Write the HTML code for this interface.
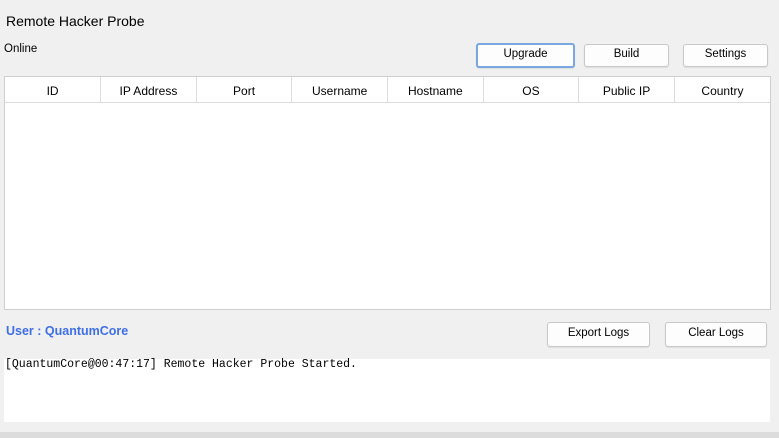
<!DOCTYPE html>
<html><head><style>
body{margin:0;width:779px;height:438px;background:#f0f0f0;font-family:"Liberation Sans",sans-serif;position:relative;overflow:hidden;color:#000}
.a{position:absolute}
.btn{position:absolute;background:#fdfdfd;border:1px solid #c8c8c8;border-radius:3px;font-size:11.5px;text-align:center;box-sizing:border-box;box-shadow:0 1px 1px rgba(0,0,0,.08)}
table{border-collapse:collapse;table-layout:fixed}
th{font-weight:normal;font-size:12px;height:23px;padding:2px 0 0 0;border-right:1px solid #dcdcdc;border-bottom:1px solid #dcdcdc}
</style></head><body>
<div class="a" style="left:6px;top:13px;font-size:14px">Remote Hacker Probe</div>
<div class="a" style="left:4px;top:43px;font-size:11.5px">Online</div>
<div class="btn" style="left:476px;top:43px;width:99px;height:25px;line-height:19px;border:2px solid #7aa7e0">Upgrade</div>
<div class="btn" style="left:584px;top:44px;width:85px;height:23px;line-height:18px">Build</div>
<div class="btn" style="left:683px;top:44px;width:85px;height:23px;line-height:18px">Settings</div>
<div class="a" style="left:4px;top:76px;width:765px;height:232px;background:#fff;border:1px solid #cfcfcf">
<table style="width:765px"><tr><th>ID</th><th>IP Address</th><th>Port</th><th>Username</th><th>Hostname</th><th>OS</th><th>Public IP</th><th style="border-right:none">Country</th></tr></table>
</div>
<div class="a" style="left:6px;top:324px;font-size:12.5px;font-weight:bold;color:#3f6fe6">User : QuantumCore</div>
<div class="btn" style="left:547px;top:322px;width:103px;height:25px;line-height:20px">Export Logs</div>
<div class="btn" style="left:665px;top:322px;width:102px;height:25px;line-height:20px">Clear Logs</div>
<div class="a" style="left:4px;top:359px;width:766px;height:63px;background:#fff"></div>
<div class="a" style="left:5px;top:358px;font-family:'Liberation Mono',monospace;font-size:11.5px">[QuantumCore@00:47:17] Remote Hacker Probe Started.</div>
<div class="a" style="left:0;top:432px;width:779px;height:6px;background:#dcdcdc"></div>
</body></html>
